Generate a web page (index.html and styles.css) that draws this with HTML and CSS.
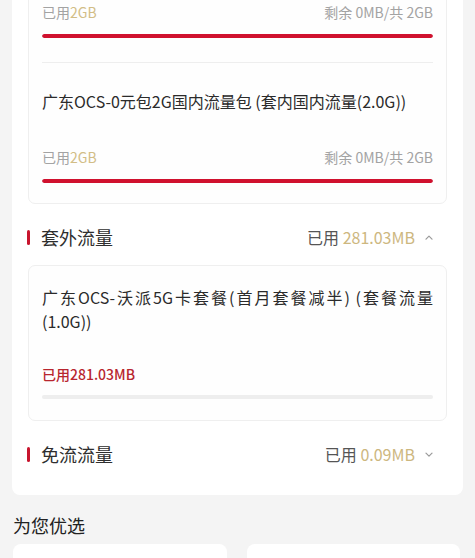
FILE: index.html
```html
<!DOCTYPE html>
<html lang="zh-CN">
  <head>
    <meta charset="UTF-8" />
    <title>流量详情</title>
    <link rel="stylesheet" href="styles.css">
  </head>
  <body>
    <div class="page">
      <div class="usage-card">
        <div class="pkg-list">
          <div class="pkg first">
            <div class="usage">
              <span class="used">已用<em>2GB</em></span>
              <span class="left">剩余 0MB/共 2GB</span>
            </div>
            <div class="bar"><div class="fill" style="width: 100%"></div></div>
          </div>
          <div class="pkg">
            <div class="pkg-name">广东OCS-0元包2G国内流量包 (套内国内流量(2.0G))</div>
            <div class="usage">
              <span class="used">已用<em>2GB</em></span>
              <span class="left">剩余 0MB/共 2GB</span>
            </div>
            <div class="bar"><div class="fill" style="width: 100%"></div></div>
          </div>
        </div>

        <div class="section-head">
          <span class="mark"></span>
          <span class="section-title">套外流量</span>
          <span class="section-used">已用 <em>281.03MB</em></span>
          <svg class="caret" width="8" height="5" viewBox="0 0 8 5"><path d="M1 4.2 L4 1.2 L7 4.2" fill="none" stroke="#9a9a9a" stroke-width="1.2" stroke-linecap="round" stroke-linejoin="round"/></svg>
        </div>

        <div class="pkg-list">
          <div class="pkg solo">
            <div class="pkg-name">广东OCS-沃派5G卡套餐(首月套餐减半) (套餐流量(1.0G))</div>
            <div class="usage extra">
              <span class="used red">已用281.03MB</span>
            </div>
            <div class="bar"><div class="fill" style="width: 0%"></div></div>
          </div>
        </div>

        <div class="section-head">
          <span class="mark"></span>
          <span class="section-title">免流流量</span>
          <span class="section-used">已用 <em>0.09MB</em></span>
          <svg class="caret" width="8" height="5" viewBox="0 0 8 5"><path d="M1 1.2 L4 4.2 L7 1.2" fill="none" stroke="#9a9a9a" stroke-width="1.2" stroke-linecap="round" stroke-linejoin="round"/></svg>
        </div>
      </div>

      <h2 class="pick-title">为您优选</h2>
      <div class="picks">
        <div class="pick"></div>
        <div class="pick"></div>
      </div>
    </div>
  </body>
</html>
```

FILE: styles.css
```css
body {
  margin: 0;
  background: #f4f4f4;
  font-family: "Noto Sans CJK SC", "Noto Sans", sans-serif;
  color: #333;
}
em {
  font-style: normal;
}
.page {
  padding: 0 12px;
}
.usage-card {
  margin-top: -30px;
  background: #fff;
  border-radius: 8px;
  padding: 14px 16px 13px;
}
.pkg-list {
  background: #fefefe;
  border: 1px solid #efefef;
  border-radius: 7px;
  padding: 0 13px;
}
.pkg {
  padding: 26px 0 20px;
}
.pkg + .pkg {
  border-top: 1px solid #eeeeee;
}
.pkg.first {
  padding-top: 17px;
  padding-bottom: 24px;
}
.pkg.solo {
  padding-top: 19px;
  padding-bottom: 21px;
}
.pkg-name {
  font-size: 16px;
  line-height: 24px;
  text-align: justify;
  color: #2b2b2b;
  margin-bottom: 34px;
}
.solo .pkg-name {
  margin-bottom: 31px;
}
.usage {
  display: flex;
  justify-content: space-between;
  font-size: 14px;
  line-height: 20px;
  color: #a3a3a3;
}
.usage em {
  color: #d2bd86;
}
.used.red {
  color: #b8262f;
  font-weight: 500;
}
.bar {
  margin-top: 12px;
  height: 4px;
  border-radius: 2px;
  background: #eeeeee;
  overflow: hidden;
}
.extra + .bar {
  margin-top: 11px;
}
.fill {
  height: 100%;
  background: #d0112e;
  border-radius: 2px;
}
.section-head {
  display: flex;
  align-items: center;
  padding: 20px 14px 15px 0;
  line-height: 26px;
}
.mark {
  width: 3px;
  height: 15px;
  border-radius: 2px;
  background: #c8152e;
  margin-left: -1px;
  margin-right: 11px;
}
.section-title {
  flex: 1;
  font-size: 18px;
  color: #2e2e2e;
}
.section-used {
  font-size: 16px;
  color: #555;
}
.section-used em {
  color: #cdb77f;
}
.caret {
  margin-left: 10px;
}
.pick-title {
  margin: 17px 0 6px 1px;
  font-size: 18px;
  font-weight: normal;
  line-height: 26px;
  color: #222;
}
.picks {
  display: grid;
  grid-template-columns: 1fr 1fr;
  gap: 20px;
  padding: 0 3px 0 1px;
}
.pick {
  height: 120px;
  background: #fff;
  border-radius: 8px;
}
```
